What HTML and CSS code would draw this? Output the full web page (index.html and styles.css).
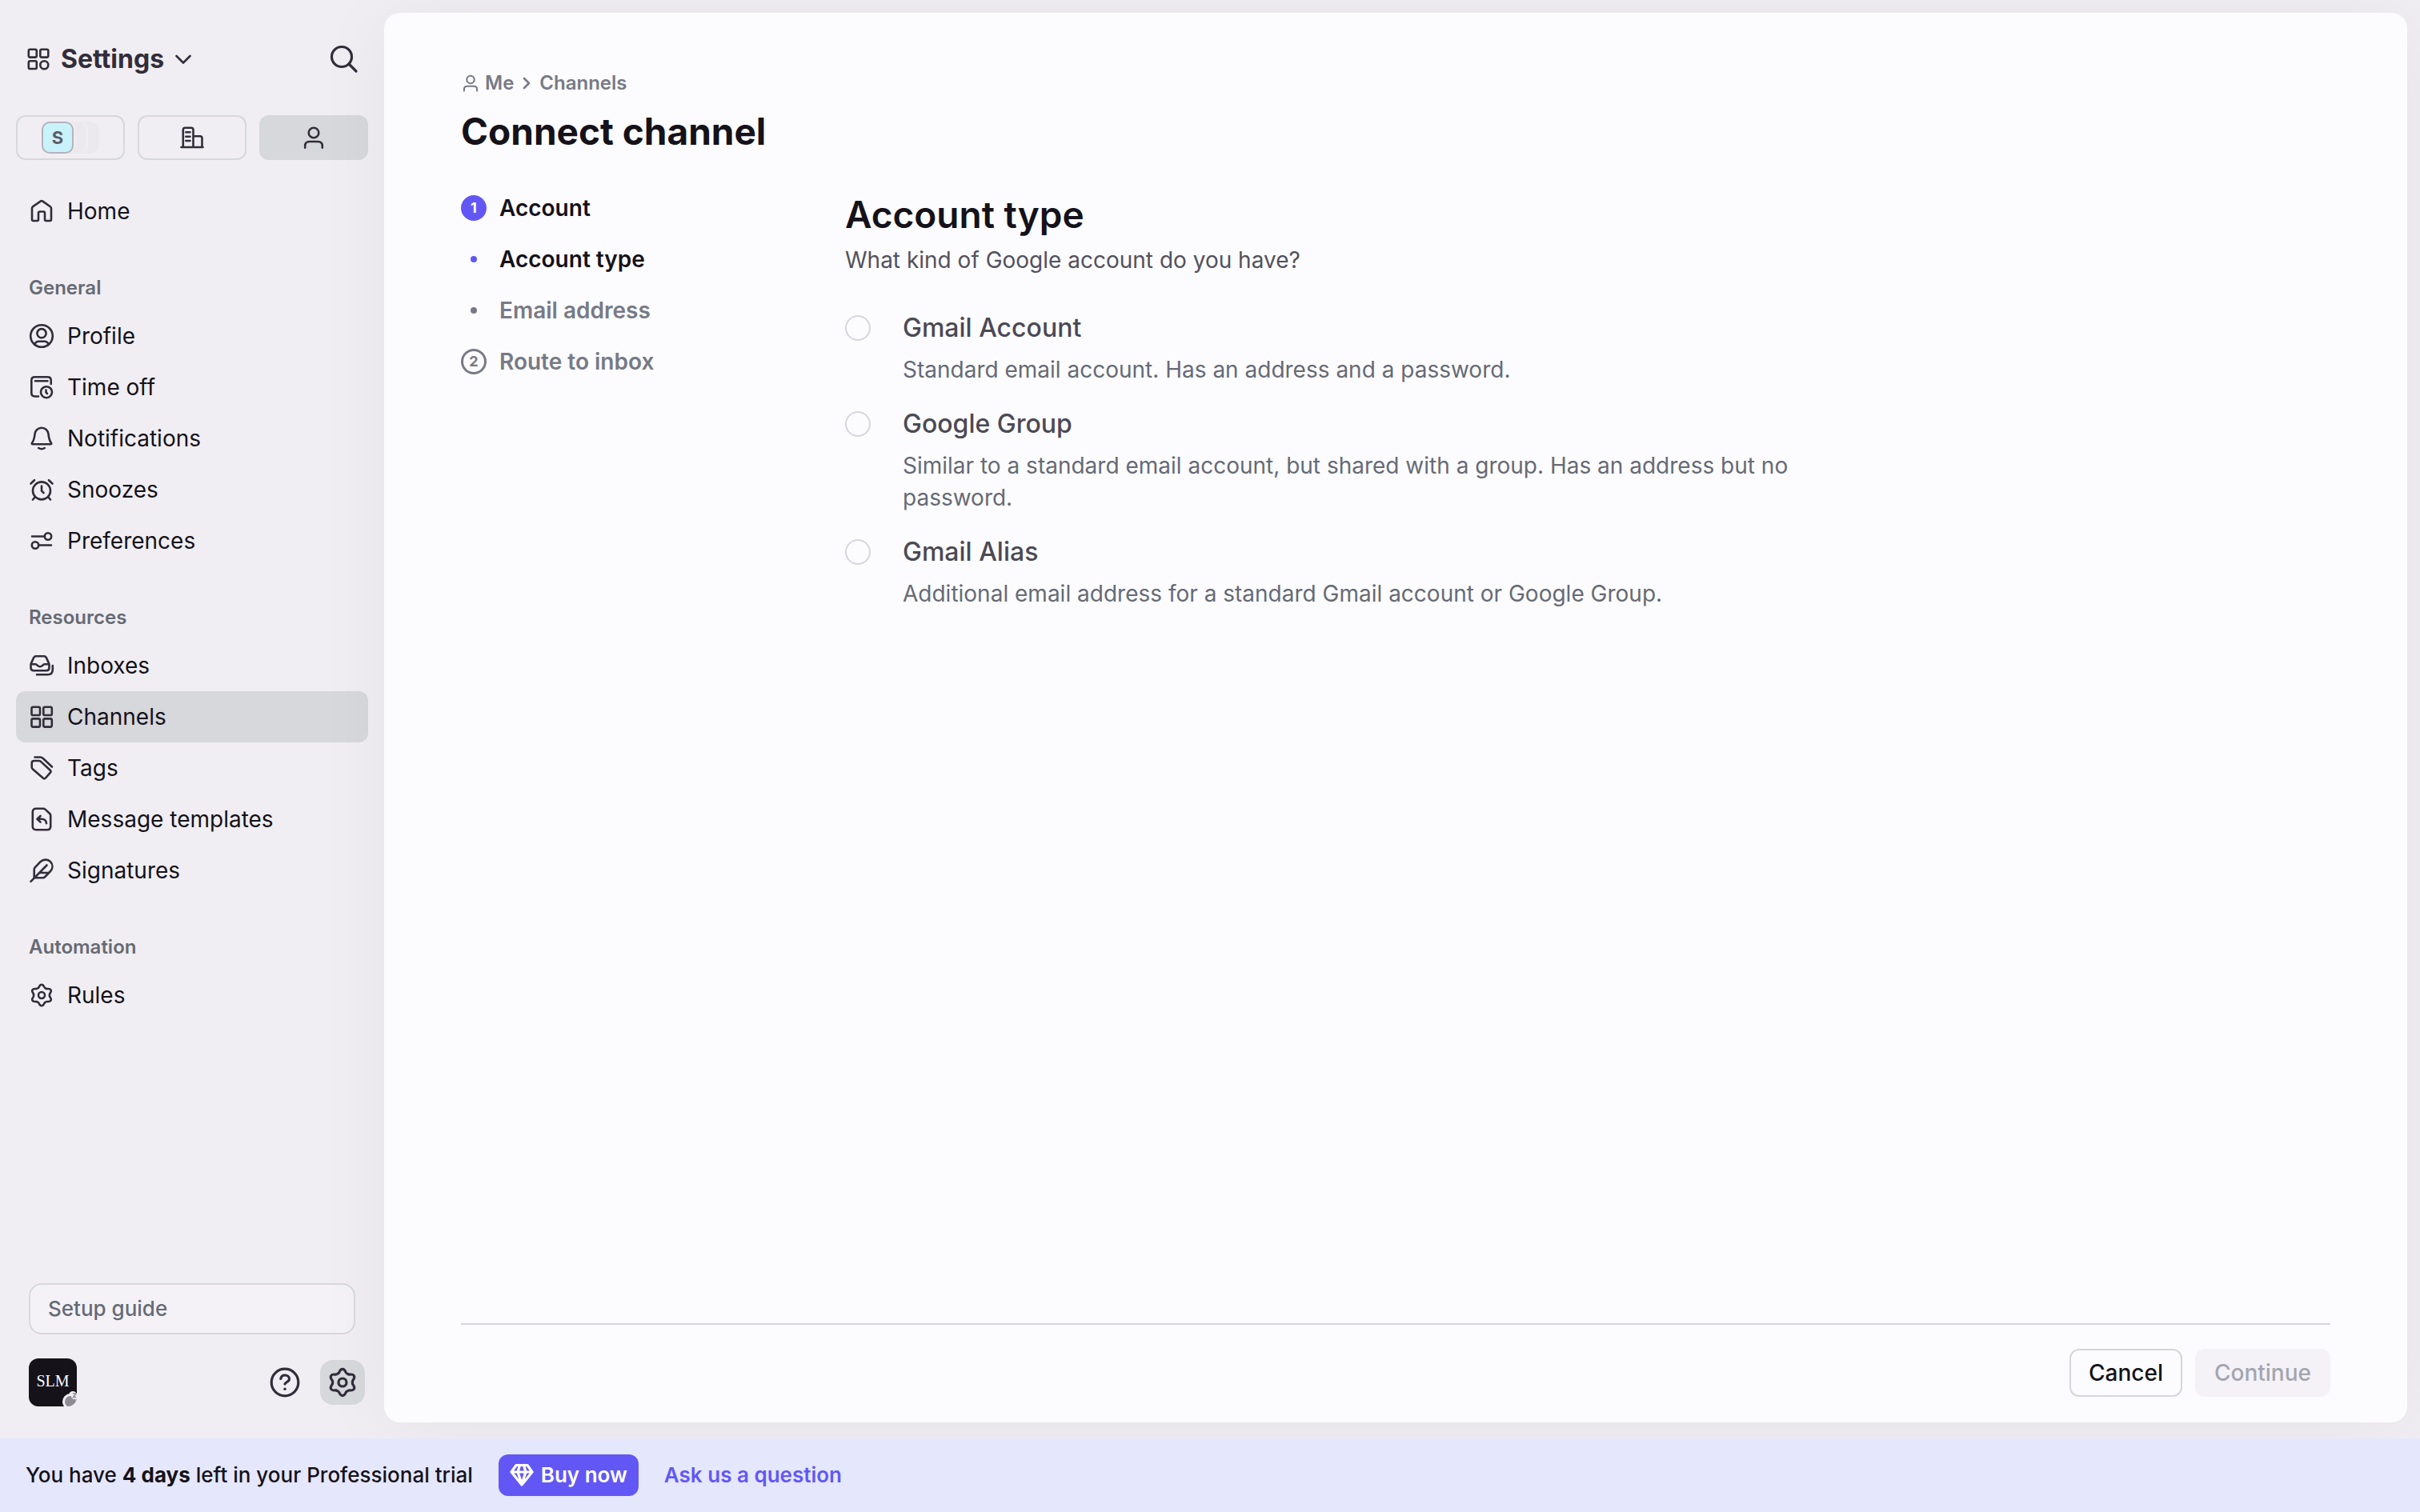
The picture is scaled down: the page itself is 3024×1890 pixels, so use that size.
FILE: index.html
```html
<!DOCTYPE html>
<html lang="en">
<head>
<meta charset="utf-8">
<meta name="viewport" content="width=device-width, initial-scale=1">
<title>Connect channel</title>
<link rel="stylesheet" href="styles.css">
</head>
<body>
<svg class="sprite" aria-hidden="true">
  <symbol id="tooth" overflow="visible"><path d="M-5-11.5C-3.500-12.500-3.500-16.600 0-16.600S3.500-12.500 5-11.500C5.800-11 6.600-10.500 7.460-10.080"/></symbol>
  <symbol id="gear" viewBox="-20 -20 40 40">
    <use href="#tooth"/><use href="#tooth" transform="rotate(60)"/><use href="#tooth" transform="rotate(120)"/><use href="#tooth" transform="rotate(180)"/><use href="#tooth" transform="rotate(240)"/><use href="#tooth" transform="rotate(300)"/>
    <circle r="5"/>
  </symbol>
  <symbol id="person" viewBox="0 0 32 32"><circle cx="16" cy="10" r="6.300"/><path d="M5.200 28.800V26.500Q5.200 21 10.700 21H21.300Q26.800 21 26.800 26.500V28.800"/></symbol>
</svg>

<div class="app">
  <aside class="sidebar">
    <header class="sidebar-head">
      <button class="switcher" type="button">
        <svg class="icon" width="28" height="28" viewBox="0 0 28 28"><rect x="1.800" y="1.800" width="10" height="9.800" rx="1.800"/><rect x="16.300" y="1.800" width="10" height="9.800" rx="1.800"/><rect x="1.800" y="16.200" width="10" height="9.800" rx="1.800"/><circle cx="21.300" cy="21.200" r="5"/></svg>
        <span>Settings</span>
        <svg class="icon" width="20" height="20" viewBox="0 0 20 20"><path d="M1.500 6L10 14.500L18.500 6"/></svg>
      </button>
      <button class="plain" type="button" aria-label="Search">
        <svg class="icon bold" width="36" height="36" viewBox="0 0 36 36"><circle cx="15" cy="15" r="12.500"/><path d="M24 24L33 33"/></svg>
      </button>
    </header>

    <div class="scopes">
      <button class="scope" type="button" aria-label="Workspace">
        <span class="tile tile-main">S</span><span class="tile"></span><span class="tile"></span>
      </button>
      <button class="scope" type="button" aria-label="Company">
        <svg class="icon" width="32" height="32" viewBox="0 0 32 32"><path d="M2.500 28H29.500M4.800 28V6.300Q4.800 3.800 7.300 3.800H15Q17.500 3.800 17.500 6.300V28M17.500 14.200H26Q28.500 14.200 28.500 16.700V28M8.300 9.300H13.500M8.300 14.700H13.500M8.300 20H13.500"/></svg>
      </button>
      <button class="scope scope-active" type="button" aria-label="Me">
        <svg class="icon" width="32" height="32"><use href="#person"/></svg>
      </button>
    </div>

    <nav class="nav">
      <a class="nav-item" href="#home"><svg class="icon" width="32" height="32" viewBox="0 0 32 32"><path d="M4 12.500Q4 11 5.200 10.200L15 3.400Q16 2.800 17 3.400L26.800 10.200Q28 11 28 12.500V26.500Q28 28 26.500 28H21.500Q20 28 20 26.500V18.500Q20 16.500 18 16.500H14Q12 16.500 12 18.500V26.500Q12 28 10.500 28H5.500Q4 28 4 26.500Z"/></svg>Home</a>

      <h2 class="nav-label">General</h2>
      <a class="nav-item" href="#profile"><svg class="icon" width="32" height="32" viewBox="0 0 32 32"><circle cx="16" cy="16" r="13.800"/><circle cx="16" cy="12.700" r="5.600"/><path d="M7.500 26.500Q8.500 22.800 12.500 22.800H19.500Q23.500 22.800 24.500 26.500"/></svg>Profile</a>
      <a class="nav-item" href="#time-off"><svg class="icon" width="32" height="32" viewBox="0 0 32 32"><path d="M12 27.500H7.500Q3.300 27.500 3.300 23.300V7.300Q3.300 3.200 7.500 3.200H23.500Q27.700 3.200 27.700 7.300V12M8 8.200H23.500M21.500 19.500V22.500L23 24"/><circle cx="22" cy="22.200" r="7"/></svg>Time off</a>
      <a class="nav-item" href="#notifications"><svg class="icon" width="32" height="32" viewBox="0 0 32 32"><path d="M16 2.800C20.500 2.800 24 6 24.500 10.500C25 16 26 19 28 21.800Q28.600 23.200 27.200 23.200H4.800Q3.400 23.200 4 21.800C6 19 7 16 7.500 10.500C8 6 11.500 2.800 16 2.800ZM12.200 28Q16 30.500 19.800 28"/></svg>Notifications</a>
      <a class="nav-item" href="#snoozes"><svg class="icon" width="32" height="32" viewBox="0 0 32 32"><circle cx="16" cy="17.400" r="11"/><path d="M16 11.500V17.500L18.500 20.200M2.500 8.500L7 4.200M29.500 8.500L25 4.200M5 28.500L8 25.200M27 28.500L24 25.200"/></svg>Snoozes</a>
      <a class="nav-item" href="#preferences"><svg class="icon" width="32" height="32" viewBox="0 0 32 32"><path d="M4 10.500H19.500M12.500 21.500H28"/><circle cx="24" cy="10.500" r="4.200"/><circle cx="8" cy="21.500" r="4.200"/></svg>Preferences</a>

      <h2 class="nav-label">Resources</h2>
      <a class="nav-item" href="#inboxes"><svg class="icon" width="32" height="32" viewBox="0 0 32 32"><path d="M2.500 15C3 12 5 8.500 6.200 6Q7.200 4.300 9 4.300H19Q20.800 4.300 21.800 6C23 8.500 25 12 25.500 15V18.500Q25.500 22.200 22 22.200H6Q2.500 22.200 2.500 18.500ZM2.500 14.300H8.500C10.500 14.300 11 17.300 14 17.300S17.500 14.300 19.500 14.300H25.500M10 27.300H23.500Q29.800 27.300 29.800 21V16"/></svg>Inboxes</a>
      <a class="nav-item nav-active" href="#channels" aria-current="page"><svg class="icon" width="32" height="32" viewBox="0 0 32 32"><rect x="3.500" y="3.800" width="10.500" height="10.200" rx="1.800"/><rect x="18.300" y="3.800" width="10.500" height="10.200" rx="1.800"/><rect x="3.500" y="18.400" width="10.500" height="10.200" rx="1.800"/><rect x="18.300" y="18.400" width="10.500" height="10.200" rx="1.800"/></svg>Channels</a>
      <a class="nav-item" href="#tags"><svg class="icon" width="32" height="32" viewBox="0 0 32 32"><path d="M6.500 7H12.500Q14 7 15.200 8.100L26.700 18.700Q28.200 20.200 26.800 21.800L20.800 28.600Q19.300 30 17.700 28.600L5 17.600Q3.700 16.400 3.700 15V9.800Q3.700 7 6.500 7ZM7.500 2.500H14.500Q16.200 2.500 17.500 3.700L29 14.500"/></svg>Tags</a>
      <a class="nav-item" href="#templates"><svg class="icon" width="32" height="32" viewBox="0 0 32 32"><path d="M9 2.800H18Q19.500 2.800 20.700 3.900L26.200 9Q27.200 10 27.200 11.500V25Q27.200 29.200 23 29.200H9Q4.800 29.200 4.800 25V7Q4.800 2.800 9 2.800ZM14.500 12L10.500 15.800L14.500 19.600M10.500 15.800H16Q21.500 15.800 22 21.200"/></svg>Message templates</a>
      <a class="nav-item" href="#signatures"><svg class="icon" width="32" height="32" viewBox="0 0 32 32"><path d="M2.500 29.800L22.500 9.500M6.700 25.300V15Q6.700 13.500 7.700 12.400L14.500 5.200C18.500 1.500 24 2 27 5.200C30.300 8.700 30.300 13.500 27 17L20.300 24Q19 25.300 17.300 25.300H6.700M13.500 19H23.500"/></svg>Signatures</a>

      <h2 class="nav-label">Automation</h2>
      <a class="nav-item" href="#rules"><svg class="icon gear-small" width="32" height="32"><use href="#gear"/></svg>Rules</a>
    </nav>

    <div class="sidebar-foot">
      <button class="guide" type="button">Setup guide</button>
      <div class="tools">
        <button class="avatar" type="button">SLM
          <svg class="status" width="20" height="20" viewBox="0 0 20 20" aria-hidden="true"><circle class="status-ring" cx="12" cy="14" r="10"/><circle class="status-ring" cx="15" cy="6" r="5"/><circle class="status-moon" cx="12" cy="14" r="7"/><circle class="status-ring" cx="17" cy="7" r="4"/><path class="status-z" d="M15 4H19L15.500 8.500H19"/></svg>
        </button>
        <button class="plain help" type="button" aria-label="Help">
          <svg class="icon bold" width="40" height="40" viewBox="0 0 40 40"><circle cx="20" cy="20" r="16.800"/><path d="M14.800 15.500C15.300 12.500 17.300 11 20 11C23 11 25.500 12.800 25.500 15.700C25.500 19 21 19.500 20 22"/><circle class="dot-fill" cx="20" cy="28.300" r="1.700"/></svg>
        </button>
        <button class="plain cog" type="button" aria-label="Settings">
          <svg class="icon bold" width="40" height="40"><use href="#gear"/></svg>
        </button>
      </div>
    </div>
  </aside>

  <main class="panel">
    <nav class="crumbs" aria-label="Breadcrumb">
      <a class="crumb" href="#me"><svg class="icon thick" width="24" height="24"><use href="#person"/></svg>Me</a>
      <svg class="icon" width="10" height="16" viewBox="0 0 10 16"><path d="M2 2L8 8L2 14"/></svg>
      <a class="crumb" href="#channels">Channels</a>
    </nav>
    <h1 class="title">Connect channel</h1>

    <div class="wizard">
      <ol class="steps">
        <li class="step step-on"><span class="badge badge-on">1</span>Account</li>
        <li class="step step-on"><span class="bullet"></span>Account type</li>
        <li class="step"><span class="bullet"></span>Email address</li>
        <li class="step"><span class="badge">2</span>Route to inbox</li>
      </ol>

      <form class="form">
        <h2 class="form-title">Account type</h2>
        <p class="form-hint">What kind of Google account do you have?</p>
        <div class="options">
          <div class="option">
            <input class="radio" type="radio" name="account" id="gmail" value="gmail">
            <label for="gmail"><span class="option-name">Gmail Account</span><span class="option-text">Standard email account. Has an address and a password.</span></label>
          </div>
          <div class="option">
            <input class="radio" type="radio" name="account" id="group" value="group">
            <label for="group"><span class="option-name">Google Group</span><span class="option-text">Similar to a standard email account, but shared with a group. Has an address but no password.</span></label>
          </div>
          <div class="option">
            <input class="radio" type="radio" name="account" id="alias" value="alias">
            <label for="alias"><span class="option-name">Gmail Alias</span><span class="option-text">Additional email address for a standard Gmail account or Google Group.</span></label>
          </div>
        </div>
      </form>
    </div>

    <footer class="actions">
      <button class="btn" type="button">Cancel</button>
      <button class="btn btn-muted" type="button" disabled>Continue</button>
    </footer>
  </main>
</div>

<div class="banner">
  <p>You have <strong>4 days</strong> left in your Professional trial</p>
  <button class="buy" type="button">
    <svg class="icon bold" width="30" height="30" viewBox="0 0 30 30"><path d="M8 2.500H22L28 11L15 27L2 11ZM2 11H28M12.500 2.500L10 11L15 26L20 11L17.500 2.500"/></svg>
    Buy now
  </button>
  <a class="ask" href="#ask">Ask us a question</a>
</div>
</body>
</html>
```

FILE: styles.css
```css
:root {
  --ink: #15121a;
  --icon: #322d3a;
  --muted: #666a75;
  --soft: #777a86;
  --line: #d6d8dc;
  --chip: #d6d8dc;
  --accent: #6257f5;
}

* { box-sizing: border-box; }

body {
  margin: 0;
  min-height: 100vh;
  display: flex;
  flex-direction: column;
  background: #f0eef2;
  color: var(--ink);
  font: 400 28px/40px Inter, "Liberation Sans", sans-serif;
}

h1, h2, p, ol { margin: 0; padding: 0; }
a { color: inherit; text-decoration: none; }
button { font: inherit; color: inherit; border: 0; padding: 0; background: none; }

.sprite { position: absolute; width: 0; height: 0; }

.icon {
  flex: none;
  fill: none;
  stroke: currentColor;
  stroke-width: 2.6;
  stroke-linecap: round;
  stroke-linejoin: round;
}
.icon.bold { stroke-width: 3.2; }
.icon.thick { stroke-width: 2.8; }
.icon.gear-small { stroke-width: 3.2; }
.icon .dot-fill { fill: currentColor; stroke: none; }

.app { flex: 1; display: flex; }

/* Sidebar */
.sidebar {
  width: 480px;
  flex: none;
  padding: 36px 20px 40px;
  display: flex;
  flex-direction: column;
}
.sidebar-head {
  height: 76px;
  padding: 0 12px 0 14px;
  display: flex;
  align-items: center;
  justify-content: space-between;
  color: var(--icon);
}
.switcher {
  display: flex;
  align-items: center;
  gap: 14px;
  font-size: 32px;
  font-weight: 700;
}
.plain { display: flex; align-items: center; justify-content: center; color: var(--icon); }

.scopes { display: grid; grid-template-columns: repeat(3, 1fr); gap: 16px; margin: 32px 0; }
.scope {
  height: 56px;
  display: flex;
  align-items: center;
  justify-content: center;
  border: 2px solid var(--line);
  border-radius: 12px;
  color: var(--icon);
}
.scope-active { background: var(--chip); }
.tile {
  width: 40px;
  height: 40px;
  margin-left: -24px;
  border-radius: 12px;
  background: #ebe9ed;
  box-shadow: 2px 0 0 #f0eef2;
}
.tile-main {
  position: relative;
  z-index: 1;
  margin-left: 0;
  border: 2px solid #b5b2be;
  border-radius: 10px;
  background: #c9f3fa;
  color: #5d5c68;
  font-size: 22px;
  font-weight: 700;
  line-height: 36px;
}
.tile:nth-child(2) { z-index: 0; position: relative; }

.nav { display: flex; flex-direction: column; }
.nav-item {
  display: flex;
  align-items: center;
  gap: 16px;
  height: 64px;
  padding: 0 16px;
  border-radius: 12px;
}
.nav-item .icon { color: var(--icon); }
.nav-active { background: var(--chip); }
.nav-label {
  padding: 44px 16px 8px;
  color: var(--muted);
  font-size: 24px;
  font-weight: 600;
  line-height: 40px;
}

.sidebar-foot { margin-top: auto; padding: 0 4px 0 16px; }
.guide {
  display: block;
  width: calc(100% - 12px);
  height: 64px;
  padding: 0 22px;
  border: 2px solid var(--line);
  border-radius: 16px;
  background: #f4f2f7;
  color: var(--muted);
  font-size: 26px;
  font-weight: 500;
  text-align: left;
}
.tools { display: flex; align-items: center; gap: 24px; margin-top: 30px; }
.avatar {
  position: relative;
  width: 60px;
  height: 60px;
  margin-right: auto;
  padding-bottom: 4px;
  overflow: hidden;
  border-radius: 12px;
  background: #15121a;
  color: #fff;
  font: 400 20px/24px "Liberation Serif", serif;
}
.status { position: absolute; right: 0; bottom: 0; }
.status-ring { fill: #f0eef2; }
.status-moon { fill: #8e8b94; }
.status-z { fill: none; stroke: #8e8b94; stroke-width: 1.5; }
.cog { width: 56px; height: 56px; border-radius: 16px; background: var(--chip); }

/* Main panel */
.panel {
  flex: 1;
  margin: 16px 16px 20px 0;
  padding: 72px 96px 32px;
  display: flex;
  flex-direction: column;
  border-radius: 20px;
  background: #fcfcfe;
  box-shadow: 0 4px 96px rgba(20, 18, 24, 0.05);
}
.crumbs {
  display: flex;
  align-items: center;
  gap: 11px;
  color: var(--soft);
  font-size: 24px;
  font-weight: 600;
  line-height: 32px;
}
.crumb { display: flex; align-items: center; gap: 6px; }
.title { margin: 16px 0 36px; font-size: 46px; font-weight: 700; line-height: 56px; }

.wizard { flex: 1; display: grid; grid-template-columns: 480px 1fr; align-items: start; }
.steps { list-style: none; }
.step {
  display: flex;
  align-items: center;
  gap: 16px;
  height: 64px;
  color: var(--soft);
  font-weight: 600;
}
.step-on { color: var(--ink); }
.badge {
  width: 32px;
  height: 32px;
  border: 3px solid var(--soft);
  border-radius: 50%;
  font-size: 18px;
  font-weight: 700;
  line-height: 26px;
  text-align: center;
}
.badge-on { border-color: var(--accent); background: var(--accent); color: #fff; }
.bullet { width: 8px; height: 8px; margin: 0 12px; border-radius: 50%; background: var(--soft); }
.step-on .bullet { background: var(--accent); }

.form { max-width: 1200px; padding-top: 12px; }
.form-title { font-size: 46px; font-weight: 600; line-height: 56px; }
.form-hint { margin-top: 9px; color: #53515d; }
.options { display: grid; gap: 24px; margin-top: 41px; }
.option { display: flex; gap: 40px; }
.radio {
  appearance: none;
  flex: none;
  width: 32px;
  height: 32px;
  margin: 8px 0;
  border: 2px solid #d6d5dd;
  border-radius: 50%;
}
.option-name { display: block; margin-bottom: 8px; color: #4b4956; font-size: 32px; font-weight: 500; line-height: 48px; }
.option-text { display: block; color: var(--muted); }

.actions {
  display: flex;
  justify-content: flex-end;
  gap: 16px;
  padding-top: 30px;
  border-top: 2px solid #d6d5dd;
}
.btn {
  height: 60px;
  padding: 0 22px;
  border: 2px solid #d6d5dd;
  border-radius: 12px;
  font-weight: 500;
}
.btn-muted { border-color: #f4f2f7; background: #f4f2f7; color: #a3a5b0; }

/* Trial banner */
.banner {
  display: flex;
  align-items: center;
  gap: 32px;
  height: 92px;
  padding: 0 32px;
  background: #e5e7fd;
  font-size: 26px;
  font-weight: 500;
}
.banner strong { font-weight: 700; }
.buy {
  display: flex;
  align-items: center;
  gap: 9px;
  height: 52px;
  padding: 0 14px;
  border-radius: 12px;
  background: var(--accent);
  color: #fff;
  font-weight: 600;
}
.ask { color: var(--accent); font-weight: 600; }
```
